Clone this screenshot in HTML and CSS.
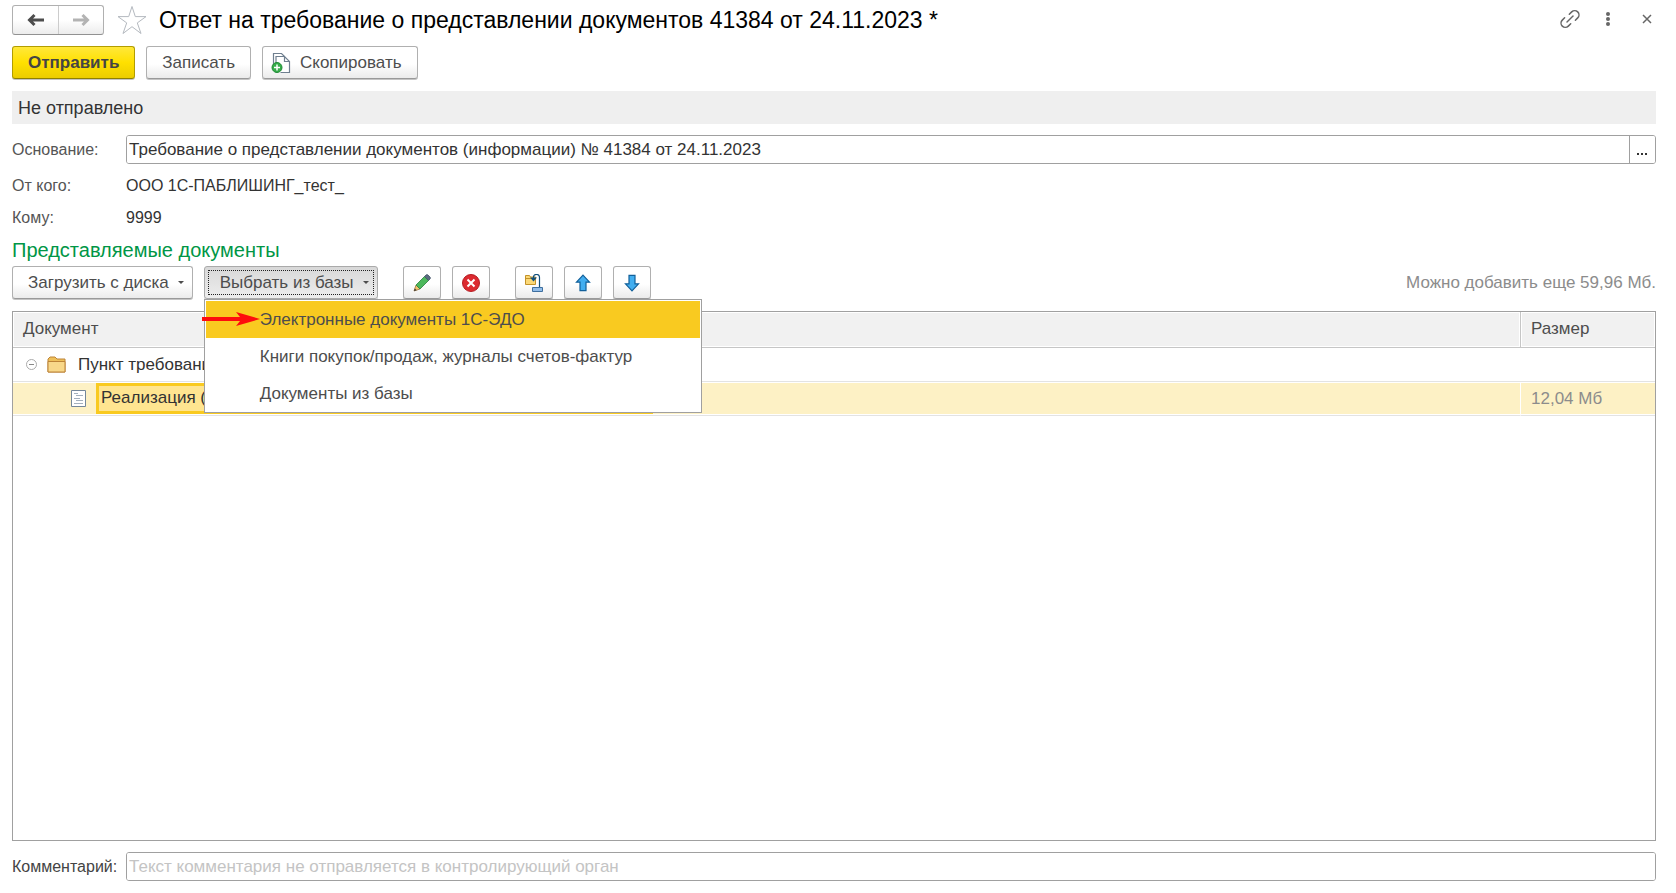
FILE: index.html
```html
<!DOCTYPE html>
<html lang="ru">
<head>
<meta charset="utf-8">
<title>Ответ на требование о представлении документов</title>
<link rel="stylesheet" href="styles.css">
</head>
<body>
<main class="form">
  <header class="titlebar">
    <div class="nav">
      <button class="nav-btn" type="button" aria-label="Назад"><svg width="18" height="14" viewBox="0 0 18 14"><path d="M2 7H17M7.500 2L2.500 7l5 5" fill="none" stroke="#4d4d4d" stroke-width="3"/></svg></button>
      <button class="nav-btn" type="button" aria-label="Вперед"><svg width="18" height="14" viewBox="0 0 18 14"><path d="M1 7h15M10.500 2l5 5-5 5" fill="none" stroke="#b3b3b3" stroke-width="3"/></svg></button>
    </div>
    <button class="icon-btn star" type="button" aria-label="Избранное"><svg width="30" height="30" viewBox="0 0 30 30"><path d="M15 1.500l3.300 10.100H29l-8.700 6.300L24 28.500l-9-6.800-9 6.800 3.700-10.600L1 11.600h10.700z" fill="#fff" stroke="#b4b9bf" stroke-width="1"/></svg></button>
    <h1 class="title">Ответ на требование о представлении документов 41384 от 24.11.2023 *</h1>
    <div class="window-tools">
      <button class="icon-btn" type="button" aria-label="Ссылка"><svg width="20" height="20" viewBox="0 0 20 20"><g fill="none" stroke="#666" stroke-width="1.500" stroke-linecap="round"><path d="M9.300 5.300l2.400-2.400a4.200 4.200 0 0 1 6 6l-2.300 2.300"/><path d="M10.700 14.700l-2.400 2.400a4.200 4.200 0 0 1-6-6l2.300-2.300"/><path d="M7 13l6-6"/></g></svg></button>
      <button class="icon-btn" type="button" aria-label="Меню"><svg width="6" height="16" viewBox="0 0 6 16"><g fill="#666"><circle cx="3" cy="3" r="2"/><circle cx="3" cy="8" r="2"/><circle cx="3" cy="13" r="2"/></g></svg></button>
      <button class="icon-btn close" type="button" aria-label="Закрыть"><svg width="10" height="10" viewBox="0 0 10 10"><path d="M1 1l8 8M9 1L1 9" stroke="#666" stroke-width="1.500"/></svg></button>
    </div>
  </header>

  <div class="commands">
    <button class="btn btn-primary" type="button">Отправить</button>
    <button class="btn" type="button">Записать</button>
    <button class="btn btn-copy" type="button"><svg width="20" height="22" viewBox="0 0 20 22"><g fill="#fff" stroke="#6f7f8f" stroke-width="1.200"><path d="M2.500 14V1.500h8l3 3"/><path d="M5 20.500V4.500h8.500l5 5v11h-9"/><path d="M13.500 4.500v5h5" fill="none"/></g><circle cx="6" cy="15.500" r="5" fill="#36ad4a" stroke="#1f8a35"/><path d="M6 12.500v6M3 15.500h6" stroke="#fff" stroke-width="1.500"/></svg><span>Скопировать</span></button>
  </div>

  <div class="status">Не отправлено</div>

  <div class="field">
    <label class="label" for="basis">Основание:</label>
    <div class="combo">
      <input id="basis" type="text" value="Требование о представлении документов (информации) № 41384 от 24.11.2023">
      <button class="pick" type="button" aria-label="Выбрать"><svg width="10" height="2" viewBox="0 0 10 2"><path d="M0 0h2v2H0zM4 0h2v2H4zM8 0h2v2H8z" fill="#333"/></svg></button>
    </div>
  </div>
  <div class="facts">
    <div class="field"><span class="label">От кого:</span><span class="value">ООО 1С-ПАБЛИШИНГ_тест_</span></div>
    <div class="field"><span class="label">Кому:</span><span class="value">9999</span></div>
  </div>

  <h2 class="section">Представляемые документы</h2>

  <div class="toolbar">
    <button class="btn btn-drop" type="button">Загрузить с диска<i class="caret"></i></button>
    <div class="dropdown">
      <button class="btn btn-drop btn-open" type="button" aria-expanded="true">Выбрать из базы<i class="caret"></i></button>
      <div class="menu" role="menu">
        <button class="menu-item menu-item-active" type="button" role="menuitem">Электронные документы 1С-ЭДО</button>
        <button class="menu-item" type="button" role="menuitem">Книги покупок/продаж, журналы счетов-фактур</button>
        <button class="menu-item" type="button" role="menuitem">Документы из базы</button>
        <svg class="pointer" width="58" height="14" viewBox="0 0 58 14"><path d="M0 5h38L34 0l24 7-24 7 4-5H0z" fill="#fe0d0d"/></svg>
      </div>
    </div>
    <div class="tools">
      <button class="btn btn-tool" type="button" aria-label="Изменить"><svg width="18" height="18" viewBox="0 0 18 18"><path d="M1 17l2-6 4 4z" fill="#f3c36b" stroke="#9a7440" stroke-width=".8"/><path d="M1 17l.8-2.600 1.800 1.800z" fill="#333"/><path d="M3 11l8.500-8.500 4 4L7 15z" fill="#4cb85c" stroke="#2b7d3b" stroke-width=".8"/><path d="M11.500 2.500L13 1q1-.8 2 0l2 2q.8 1 0 2l-1.500 1.500z" fill="#5b6c80" stroke="#44546a" stroke-width=".8"/></svg></button>
      <button class="btn btn-tool" type="button" aria-label="Удалить"><svg width="18" height="18" viewBox="0 0 18 18"><circle cx="9" cy="9" r="8.500" fill="#dc2a30" stroke="#b51c22"/><path d="M5.500 5.500l7 7M12.500 5.500l-7 7" stroke="#fff" stroke-width="2"/></svg></button>
    </div>
    <div class="tools">
      <button class="btn btn-tool" type="button" aria-label="Переместить"><svg width="18" height="18" viewBox="0 0 18 18"><path d="M.5 10.500v-9h4l1 1.500h5v7.500z" fill="#fbd877" stroke="#c39229"/><path d="M.5 4.500h10" stroke="#c39229"/><path d="M14.500 13V3.500q0-3-3-3T8.500 3v3" fill="none" stroke="#12507d" stroke-width="1.200"/><path d="M5 3.500l3.500 4 3.500-4z" fill="#12507d"/><path d="M7.500 13.500h10v4h-10z" fill="#91bce8" stroke="#3e6f9f"/></svg></button>
      <button class="btn btn-tool" type="button" aria-label="Вверх"><svg width="16" height="18" viewBox="0 0 16 18"><path d="M8 1.200l6.500 7h-3.500v8.500H5V8.200H1.500z" fill="#42aef0" stroke="#12609a" stroke-width="1.200"/></svg></button>
      <button class="btn btn-tool" type="button" aria-label="Вниз"><svg width="16" height="18" viewBox="0 0 16 18"><path d="M8 16.800l6.500-7h-3.500V1.300H5v8.500H1.500z" fill="#42aef0" stroke="#12609a" stroke-width="1.200"/></svg></button>
    </div>
    <span class="hint">Можно добавить еще 59,96 Мб.</span>
  </div>

  <div class="grid">
    <table class="docs">
      <thead>
        <tr><th>Документ</th><th class="col-size">Размер</th></tr>
      </thead>
      <tbody>
        <tr>
          <td colspan="2"><div class="node">
            <svg width="11" height="11" viewBox="0 0 11 11"><circle cx="5.500" cy="5.500" r="5" fill="#fff" stroke="#aaa"/><path d="M3 5.500h5" stroke="#888"/></svg>
            <svg width="19" height="17" viewBox="0 0 19 17"><path d="M1 16V3l2-2h5l2 2h8v13z" fill="#eec05a" stroke="#bd8438"/><path d="M1 5.500h17V16H1z" fill="#f8d88a" stroke="#bd8438"/></svg>
            <span class="node-name">Пункт требовани</span>
          </div></td>
        </tr>
        <tr class="selected">
          <td><div class="node node-child">
            <svg width="15" height="17" viewBox="0 0 15 17"><path d="M.5.5h14v16H.5z" fill="#fff" stroke="#74879a"/><path d="M3 3.500h4M5 5.500h7M3 8.500h6M5 10.500h7M3 13.500h9" stroke="#a3b0bd"/></svg>
            <span class="cell-active">Реализация (</span>
          </div></td>
          <td class="size">12,04 Мб</td>
        </tr>
      </tbody>
    </table>
  </div>

  <div class="field">
    <label class="label label-dark" for="comment">Комментарий:</label>
    <div class="combo"><input id="comment" type="text" placeholder="Текст комментария не отправляется в контролирующий орган"></div>
  </div>
</main>
</body>
</html>
```

FILE: styles.css
```css
* {
  box-sizing: border-box;
}

body {
  margin: 0;
  background: #fff;
  color: #333;
  font: 17px/20px "Liberation Sans", Arial, sans-serif;
}

button,
input {
  font: inherit;
  color: inherit;
}

svg {
  display: block;
  flex: none;
}

.form {
  display: flex;
  flex-direction: column;
  min-height: 100vh;
  padding: 5px 20px 12px 12px;
}

/* Title row */
.titlebar {
  display: flex;
  align-items: flex-start;
  height: 31px;
}

.nav {
  display: flex;
  height: 30px;
  border: 1px solid #b0b0b0;
  border-bottom-color: #919191;
  border-radius: 3px;
  background: linear-gradient(#fff 50%, #ececec);
}

.nav-btn {
  display: flex;
  align-items: center;
  justify-content: center;
  width: 45px;
  padding: 0;
  border: 0;
  background: none;
}

.nav-btn + .nav-btn {
  border-left: 1px solid #ccc;
}

.icon-btn {
  padding: 0;
  border: 0;
  background: none;
}

.star {
  margin: 0 12px 0 13px;
}

.title {
  flex: 1;
  margin: 0;
  color: #000;
  font-size: 23px;
  font-weight: 400;
  line-height: 30px;
  white-space: nowrap;
}

.window-tools {
  display: flex;
  align-items: center;
  gap: 25px;
  height: 27px;
  padding-right: 4px;
}

.close {
  margin-left: 6px;
}

/* Buttons */
.btn {
  display: flex;
  align-items: center;
  height: 33px;
  padding: 0 15px;
  border: 1px solid #b0b0b0;
  border-bottom-color: #999;
  border-radius: 3px;
  background: linear-gradient(#fff 55%, #ebebeb);
  box-shadow: 0 1px #c4c4c4;
  color: #4d4d4d;
  white-space: nowrap;
}

.btn-primary {
  border-color: #b29d00;
  border-bottom-color: #8f8000;
  background: linear-gradient(#ffe83a, #ffe000 50%, #eccd00);
  color: #444;
  font-weight: 700;
}

.btn-copy {
  gap: 9px;
  padding-left: 8px;
}

.btn-drop {
  gap: 9px;
  padding-right: 8px;
}

.btn-open {
  border-color: #aaa;
  background: linear-gradient(#d8d8d8, #ededed);
  outline: 1px dotted #222;
  outline-offset: -5px;
}

.btn-tool {
  justify-content: center;
  width: 38px;
  padding: 0;
}

.caret {
  border: 3px solid transparent;
  border-top-color: #4d4d4d;
  border-bottom: 0;
}

.commands {
  display: flex;
  gap: 11px;
  margin-top: 10px;
}

.status {
  margin: 12px 0 11px;
  padding: 7px 6px 5px;
  background: #efefef;
  font-size: 18px;
  line-height: 21px;
}

/* Fields */
.field {
  display: flex;
  align-items: center;
}

.label {
  flex: none;
  width: 114px;
  color: #555;
  font-size: 16px;
}

.label-dark {
  color: #444;
}

.value {
  font-size: 16px;
}

.combo {
  display: flex;
  flex: 1;
  height: 29px;
  overflow: hidden;
  border: 1px solid #a0a0a0;
  border-radius: 3px;
}

.combo input {
  flex: 1;
  min-width: 0;
  padding: 0 2px;
  border: 0;
  outline: 0;
  background: #fff;
}

.combo input::placeholder {
  color: #c4c4c4;
  opacity: 1;
}

.pick {
  display: flex;
  align-items: center;
  justify-content: center;
  width: 26px;
  padding: 8px 2px 0 0;
  border: 0;
  border-left: 1px solid #a0a0a0;
  background: #fff;
}

.facts {
  display: grid;
  gap: 12px;
  margin-top: 12px;
}

.section {
  margin: 10px 0 3px;
  color: #009646;
  font-size: 20px;
  font-weight: 400;
  line-height: 25px;
}

/* Document toolbar */
.toolbar {
  display: flex;
  align-items: center;
}

.dropdown {
  position: relative;
  margin-left: 11px;
}

.menu {
  position: absolute;
  z-index: 1;
  top: 100%;
  left: 0;
  width: 498px;
  padding: 1px 1px 0;
  border: 1px solid #a0a0a0;
  background: #fff;
}

.menu-item {
  display: block;
  width: 100%;
  height: 37px;
  padding: 0 54px;
  border: 0;
  background: #fff;
  color: #4d4d4d;
  text-align: left;
}

.menu-item-active {
  background: #f9ca20;
}

.pointer {
  position: absolute;
  top: 12px;
  left: -3px;
}

.tools {
  display: flex;
  gap: 11px;
  margin-left: 25px;
}

.hint {
  margin-left: auto;
  color: #8c8c8c;
}

/* Document table */
.grid {
  flex: 1;
  margin: 12px 0 11px;
  border: 1px solid #a0a0a0;
}

.docs {
  width: 100%;
  border-spacing: 0;
  table-layout: fixed;
}

.docs th,
.docs td {
  height: 34px;
  padding: 0 10px;
  border-bottom: 1px solid #e3e3e3;
  text-align: left;
}

.docs th {
  height: 36px;
  padding-bottom: 2px;
  border-bottom-color: #c6c6c6;
  background: #f1f1f1;
  box-shadow: inset 0 0 0 1px #fff;
  color: #4d4d4d;
  font-weight: 400;
}

.docs .col-size {
  width: 135px;
  border-left: 1px solid #c6c6c6;
}

.docs td:first-child {
  padding: 0 0 0 13px;
}

.node {
  display: flex;
  align-items: center;
  gap: 10px;
  height: 31px;
}

.node-name {
  padding-left: 2px;
}

.node-child {
  padding-left: 45px;
}

.selected td {
  background: #fdf1c5;
  box-shadow: inset 0 1px #fff, inset 0 -1px #fff;
}

.docs .size {
  border-left: 1px solid #fff;
  color: #8c8c8c;
}

.cell-active {
  width: 557px;
  height: 31px;
  padding: 2px;
  border: 3px solid #f9ca20;
  background: #ffe590;
}
```
